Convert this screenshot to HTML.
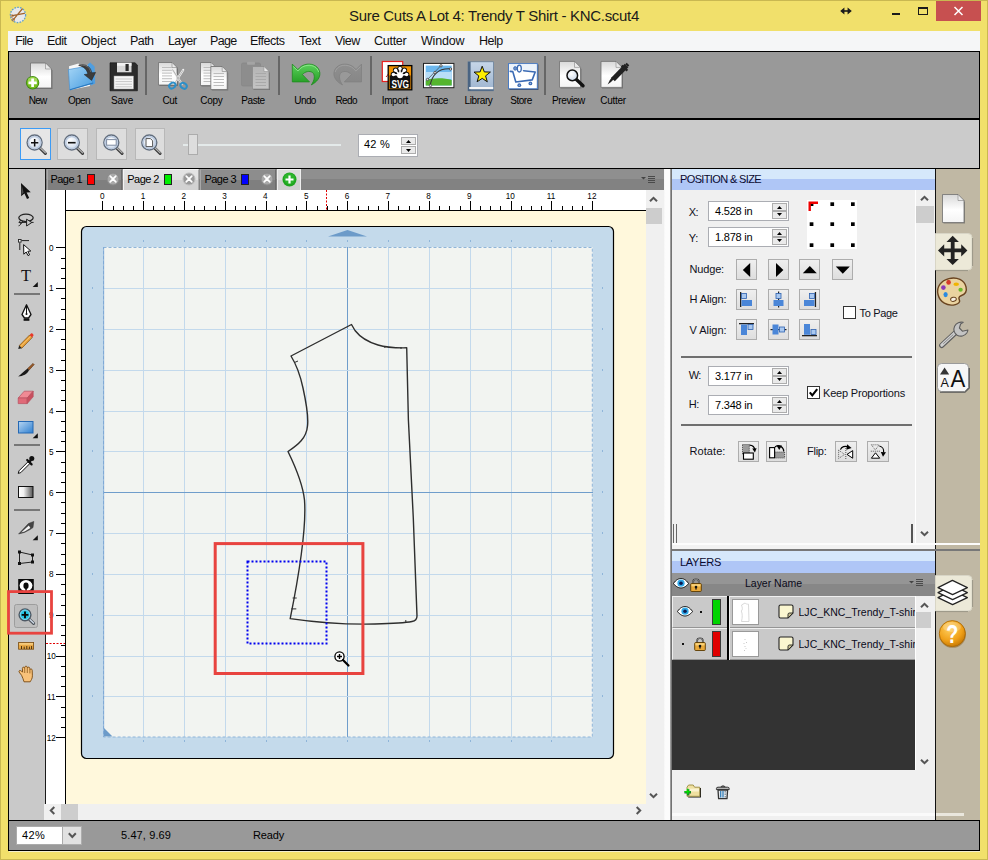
<!DOCTYPE html>
<html><head><meta charset="utf-8"><title>Sure Cuts A Lot 4</title>
<style>
html,body{margin:0;padding:0;}
body{width:988px;height:860px;overflow:hidden;background:#F1E06B;font-family:"Liberation Sans", sans-serif;}
#app{position:relative;width:988px;height:860px;overflow:hidden;}
#app div,#app span,#app svg{position:absolute;box-sizing:border-box;}
#app span{white-space:pre;}
</style></head><body><div id="app">
<div style="left:0px;top:0px;width:988px;height:860px;border:1px solid #C9B851;"></div>
<span style="left:349px;top:7.3px;font-size:15px;line-height:17px;color:#1b1b1b;letter-spacing:-0.306px;">Sure Cuts A Lot 4: Trendy T Shirt - KNC.scut4</span>
<svg style="left:8px;top:5px;" width="20" height="20" viewBox="0 0 20 20"><circle cx="10" cy="10" r="7.6" fill="#E9E9EA" stroke="#5B9FD2" stroke-width="1.3" stroke-dasharray="1.6 1.3"/><path d="M14.2 4 L5.6 14.4 M16.4 8.4 L4.4 10.6" stroke="#A0622A" stroke-width="1.2" stroke-linecap="round"/><circle cx="5.2" cy="14.8" r="1.3" fill="none" stroke="#A0622A" stroke-width=".8"/><circle cx="4" cy="11" r="1.2" fill="none" stroke="#A0622A" stroke-width=".8"/></svg>
<div style="left:936px;top:1px;width:45px;height:20px;background:#C75050;"></div>
<svg style="left:936px;top:1px;" width="45" height="20" viewBox="0 0 45 20"><path d="M18.5 6 L26.5 14 M26.5 6 L18.5 14" stroke="#fff" stroke-width="1.5" fill="none"/></svg>
<div style="left:892px;top:13px;width:8px;height:2px;background:#1b1b1b;"></div>
<div style="left:918px;top:7px;width:10px;height:8px;border:1px solid #1b1b1b;border-top-width:2px;"></div>
<svg style="left:839px;top:5px;" width="14" height="12" viewBox="0 0 14 12"><path d="M4 6 H10" stroke="#1b1b1b" stroke-width="1.6"/><path d="M1.2 6 L5.4 2.4 V9.6 Z M12.8 6 L8.6 2.4 V9.6 Z" fill="#1b1b1b"/></svg>
<div style="left:8px;top:31px;width:972px;height:20px;background:#F5F6F7;"></div>
<span style="left:15.2px;top:34.42px;font-size:12.5px;line-height:14.5px;color:#101010;letter-spacing:-0.639px;">File</span>
<span style="left:47px;top:34.42px;font-size:12.5px;line-height:14.5px;color:#101010;letter-spacing:-0.537px;">Edit</span>
<span style="left:81px;top:34.42px;font-size:12.5px;line-height:14.5px;color:#101010;letter-spacing:-0.157px;">Object</span>
<span style="left:130px;top:34.42px;font-size:12.5px;line-height:14.5px;color:#101010;letter-spacing:-0.580px;">Path</span>
<span style="left:168px;top:34.42px;font-size:12.5px;line-height:14.5px;color:#101010;letter-spacing:-0.616px;">Layer</span>
<span style="left:210px;top:34.42px;font-size:12.5px;line-height:14.5px;color:#101010;letter-spacing:-0.701px;">Page</span>
<span style="left:250px;top:34.42px;font-size:12.5px;line-height:14.5px;color:#101010;letter-spacing:-0.512px;">Effects</span>
<span style="left:299px;top:34.42px;font-size:12.5px;line-height:14.5px;color:#101010;letter-spacing:-0.334px;">Text</span>
<span style="left:335px;top:34.42px;font-size:12.5px;line-height:14.5px;color:#101010;letter-spacing:-0.569px;">View</span>
<span style="left:374px;top:34.42px;font-size:12.5px;line-height:14.5px;color:#101010;letter-spacing:-0.274px;">Cutter</span>
<span style="left:421px;top:34.42px;font-size:12.5px;line-height:14.5px;color:#101010;letter-spacing:-0.178px;">Window</span>
<span style="left:479px;top:34.42px;font-size:12.5px;line-height:14.5px;color:#101010;letter-spacing:-0.530px;">Help</span>
<div style="left:8px;top:51px;width:972px;height:69px;background:#999999;border:1px solid #000;border-bottom-width:2px;"></div>
<div style="left:9px;top:120px;width:970px;height:48px;background:#CBCBCB;"></div>
<div style="left:8px;top:120px;width:1px;height:731px;background:#000;"></div>
<div style="left:979px;top:120px;width:1px;height:49px;background:#000;"></div>
<div style="left:979px;top:820px;width:1px;height:31px;background:#000;"></div>
<div style="left:9px;top:168px;width:970px;height:1px;background:#000;"></div>
<div style="left:9px;top:169px;width:36px;height:651px;background:#C9C9C9;"></div>
<div style="left:45px;top:169px;width:1px;height:651px;background:#1a1a1a;"></div>
<div style="left:14px;top:293px;width:26px;height:2px;background:#777;"></div>
<div style="left:14px;top:444px;width:26px;height:2px;background:#777;"></div>
<div style="left:14px;top:509px;width:26px;height:2px;background:#777;"></div>
<div style="left:46px;top:169px;width:618px;height:21px;background:linear-gradient(#8f8f8f 0,#8f8f8f 50%,#828282 50%,#828282 100%);"></div>
<div style="left:47px;top:169px;width:75px;height:21px;background:linear-gradient(#8d8d8d 0,#8d8d8d 50%,#7f7f7f 50%,#7f7f7f 100%);border-left:1px solid #a8a8a8;border-top:1px solid #9c9c9c;border-right:1px solid #6c6c6c;"></div>
<span style="left:50.5px;top:172.69px;font-size:11px;line-height:13px;color:#000;letter-spacing:-0.562px;">Page 1</span>
<div style="left:87px;top:174px;width:8px;height:11px;background:#FF0000;border:1px solid #222;"></div>
<svg style="left:106.0px;top:172px;" width="14" height="14" viewBox="0 0 14 14"><circle cx="7" cy="7" r="6" fill="#a9a9a9" stroke="#8a8a8a" stroke-width="1"/><path d="M4.2 4.2 L9.8 9.8 M9.8 4.2 L4.2 9.8" stroke="#fff" stroke-width="1.7" stroke-linecap="round"/></svg>
<div style="left:123px;top:169px;width:76px;height:21px;background:linear-gradient(#e4e4e4 0,#e0e0e0 50%,#d2d2d2 50%,#d2d2d2 100%);border-left:1px solid #f4f4f4;border-top:1px solid #f4f4f4;border-right:1px solid #aaa;"></div>
<span style="left:127.3px;top:172.69px;font-size:11px;line-height:13px;color:#000;letter-spacing:-0.562px;">Page 2</span>
<div style="left:163.8px;top:174px;width:8px;height:11px;background:#00EE00;border:1px solid #222;"></div>
<svg style="left:182.4px;top:172px;" width="14" height="14" viewBox="0 0 14 14"><circle cx="7" cy="7" r="6" fill="#9a9a9a" stroke="#bdbdbd" stroke-width="1"/><path d="M4.2 4.2 L9.8 9.8 M9.8 4.2 L4.2 9.8" stroke="#fff" stroke-width="1.7" stroke-linecap="round"/></svg>
<div style="left:200px;top:169px;width:76px;height:21px;background:linear-gradient(#8d8d8d 0,#8d8d8d 50%,#7f7f7f 50%,#7f7f7f 100%);border-left:1px solid #a8a8a8;border-top:1px solid #9c9c9c;border-right:1px solid #6c6c6c;"></div>
<span style="left:204.5px;top:172.69px;font-size:11px;line-height:13px;color:#000;letter-spacing:-0.562px;">Page 3</span>
<div style="left:241px;top:174px;width:8px;height:11px;background:#0000FF;border:1px solid #222;"></div>
<svg style="left:259.5px;top:172px;" width="14" height="14" viewBox="0 0 14 14"><circle cx="7" cy="7" r="6" fill="#a9a9a9" stroke="#8a8a8a" stroke-width="1"/><path d="M4.2 4.2 L9.8 9.8 M9.8 4.2 L4.2 9.8" stroke="#fff" stroke-width="1.7" stroke-linecap="round"/></svg>
<div style="left:277px;top:169px;width:24px;height:21px;background:linear-gradient(#dcdcdc 0,#dcdcdc 50%,#cfcfcf 50%,#cfcfcf 100%);border:1px solid #eee;border-bottom:none;"></div>
<svg style="left:282px;top:172px;" width="15" height="15" viewBox="0 0 15 15"><circle cx="7.5" cy="7.5" r="7" fill="#1fa51f"/><circle cx="7.5" cy="6.5" r="5.5" fill="#35c035" opacity=".6"/><path d="M7.5 3.5 V11.5 M3.5 7.5 H11.5" stroke="#fff" stroke-width="2.2"/></svg>
<svg style="left:640px;top:174px;" width="18" height="10" viewBox="0 0 18 10"><path d="M1 3 H6 L3.5 5.5 Z" fill="#444"/><path d="M8 2.5 H15 M8 4.5 H15 M8 6.5 H15 M8 8.5 H15" stroke="#4a4a4a" stroke-width="1"/></svg>
<div style="left:46px;top:190px;width:600px;height:21px;background:#fff;"></div>
<div style="left:46px;top:190px;width:20px;height:614px;background:#fff;"></div>
<div style="left:66px;top:211px;width:580px;height:593px;background:#FFF8DC;"></div>
<svg style="left:46px;top:190px;font-family:'Liberation Sans', sans-serif;" width="600" height="614" viewBox="0 0 600 614"><rect x="56" y="11" width="1" height="9" fill="#000"/><rect x="67" y="16" width="1" height="4" fill="#000"/><rect x="77" y="16" width="1" height="4" fill="#000"/><rect x="87" y="16" width="1" height="4" fill="#000"/><rect x="97" y="11" width="1" height="9" fill="#000"/><rect x="107" y="16" width="1" height="4" fill="#000"/><rect x="118" y="16" width="1" height="4" fill="#000"/><rect x="128" y="16" width="1" height="4" fill="#000"/><rect x="138" y="11" width="1" height="9" fill="#000"/><rect x="148" y="16" width="1" height="4" fill="#000"/><rect x="158" y="16" width="1" height="4" fill="#000"/><rect x="169" y="16" width="1" height="4" fill="#000"/><rect x="179" y="11" width="1" height="9" fill="#000"/><rect x="189" y="16" width="1" height="4" fill="#000"/><rect x="199" y="16" width="1" height="4" fill="#000"/><rect x="209" y="16" width="1" height="4" fill="#000"/><rect x="220" y="11" width="1" height="9" fill="#000"/><rect x="230" y="16" width="1" height="4" fill="#000"/><rect x="240" y="16" width="1" height="4" fill="#000"/><rect x="250" y="16" width="1" height="4" fill="#000"/><rect x="260" y="11" width="1" height="9" fill="#000"/><rect x="271" y="16" width="1" height="4" fill="#000"/><rect x="281" y="16" width="1" height="4" fill="#000"/><rect x="291" y="16" width="1" height="4" fill="#000"/><rect x="301" y="11" width="1" height="9" fill="#000"/><rect x="312" y="16" width="1" height="4" fill="#000"/><rect x="322" y="16" width="1" height="4" fill="#000"/><rect x="332" y="16" width="1" height="4" fill="#000"/><rect x="342" y="11" width="1" height="9" fill="#000"/><rect x="352" y="16" width="1" height="4" fill="#000"/><rect x="363" y="16" width="1" height="4" fill="#000"/><rect x="373" y="16" width="1" height="4" fill="#000"/><rect x="383" y="11" width="1" height="9" fill="#000"/><rect x="393" y="16" width="1" height="4" fill="#000"/><rect x="403" y="16" width="1" height="4" fill="#000"/><rect x="414" y="16" width="1" height="4" fill="#000"/><rect x="424" y="11" width="1" height="9" fill="#000"/><rect x="434" y="16" width="1" height="4" fill="#000"/><rect x="444" y="16" width="1" height="4" fill="#000"/><rect x="454" y="16" width="1" height="4" fill="#000"/><rect x="465" y="11" width="1" height="9" fill="#000"/><rect x="475" y="16" width="1" height="4" fill="#000"/><rect x="485" y="16" width="1" height="4" fill="#000"/><rect x="495" y="16" width="1" height="4" fill="#000"/><rect x="505" y="11" width="1" height="9" fill="#000"/><rect x="516" y="16" width="1" height="4" fill="#000"/><rect x="526" y="16" width="1" height="4" fill="#000"/><rect x="536" y="16" width="1" height="4" fill="#000"/><rect x="546" y="11" width="1" height="9" fill="#000"/><rect x="20" y="20" width="580" height="1" fill="#000"/><rect x="19" y="0" width="1" height="614" fill="#000"/><rect x="10" y="57" width="9" height="1" fill="#000"/><rect x="15" y="68" width="4" height="1" fill="#000"/><rect x="15" y="78" width="4" height="1" fill="#000"/><rect x="15" y="88" width="4" height="1" fill="#000"/><rect x="10" y="98" width="9" height="1" fill="#000"/><rect x="15" y="108" width="4" height="1" fill="#000"/><rect x="15" y="119" width="4" height="1" fill="#000"/><rect x="15" y="129" width="4" height="1" fill="#000"/><rect x="10" y="139" width="9" height="1" fill="#000"/><rect x="15" y="149" width="4" height="1" fill="#000"/><rect x="15" y="159" width="4" height="1" fill="#000"/><rect x="15" y="170" width="4" height="1" fill="#000"/><rect x="10" y="180" width="9" height="1" fill="#000"/><rect x="15" y="190" width="4" height="1" fill="#000"/><rect x="15" y="200" width="4" height="1" fill="#000"/><rect x="15" y="210" width="4" height="1" fill="#000"/><rect x="10" y="221" width="9" height="1" fill="#000"/><rect x="15" y="231" width="4" height="1" fill="#000"/><rect x="15" y="241" width="4" height="1" fill="#000"/><rect x="15" y="251" width="4" height="1" fill="#000"/><rect x="10" y="261" width="9" height="1" fill="#000"/><rect x="15" y="272" width="4" height="1" fill="#000"/><rect x="15" y="282" width="4" height="1" fill="#000"/><rect x="15" y="292" width="4" height="1" fill="#000"/><rect x="10" y="302" width="9" height="1" fill="#000"/><rect x="15" y="312" width="4" height="1" fill="#000"/><rect x="15" y="323" width="4" height="1" fill="#000"/><rect x="15" y="333" width="4" height="1" fill="#000"/><rect x="10" y="343" width="9" height="1" fill="#000"/><rect x="15" y="353" width="4" height="1" fill="#000"/><rect x="15" y="364" width="4" height="1" fill="#000"/><rect x="15" y="374" width="4" height="1" fill="#000"/><rect x="10" y="384" width="9" height="1" fill="#000"/><rect x="15" y="394" width="4" height="1" fill="#000"/><rect x="15" y="404" width="4" height="1" fill="#000"/><rect x="15" y="415" width="4" height="1" fill="#000"/><rect x="10" y="425" width="9" height="1" fill="#000"/><rect x="15" y="435" width="4" height="1" fill="#000"/><rect x="15" y="445" width="4" height="1" fill="#000"/><rect x="15" y="455" width="4" height="1" fill="#000"/><rect x="10" y="466" width="9" height="1" fill="#000"/><rect x="15" y="476" width="4" height="1" fill="#000"/><rect x="15" y="486" width="4" height="1" fill="#000"/><rect x="15" y="496" width="4" height="1" fill="#000"/><rect x="10" y="506" width="9" height="1" fill="#000"/><rect x="15" y="517" width="4" height="1" fill="#000"/><rect x="15" y="527" width="4" height="1" fill="#000"/><rect x="15" y="537" width="4" height="1" fill="#000"/><rect x="10" y="547" width="9" height="1" fill="#000"/><text x="56.2" y="9.2" font-size="8.2" text-anchor="middle" fill="#000">0</text><text x="5.2" y="60.5" font-size="8.2" text-anchor="middle" fill="#000">0</text><text x="97.0" y="9.2" font-size="8.2" text-anchor="middle" fill="#000">1</text><text x="5.2" y="101.3" font-size="8.2" text-anchor="middle" fill="#000">1</text><text x="137.8" y="9.2" font-size="8.2" text-anchor="middle" fill="#000">2</text><text x="5.2" y="142.2" font-size="8.2" text-anchor="middle" fill="#000">2</text><text x="178.6" y="9.2" font-size="8.2" text-anchor="middle" fill="#000">3</text><text x="5.2" y="183.0" font-size="8.2" text-anchor="middle" fill="#000">3</text><text x="219.4" y="9.2" font-size="8.2" text-anchor="middle" fill="#000">4</text><text x="5.2" y="223.8" font-size="8.2" text-anchor="middle" fill="#000">4</text><text x="260.2" y="9.2" font-size="8.2" text-anchor="middle" fill="#000">5</text><text x="5.2" y="264.6" font-size="8.2" text-anchor="middle" fill="#000">5</text><text x="301.0" y="9.2" font-size="8.2" text-anchor="middle" fill="#000">6</text><text x="5.2" y="305.5" font-size="8.2" text-anchor="middle" fill="#000">6</text><text x="341.8" y="9.2" font-size="8.2" text-anchor="middle" fill="#000">7</text><text x="5.2" y="346.3" font-size="8.2" text-anchor="middle" fill="#000">7</text><text x="382.6" y="9.2" font-size="8.2" text-anchor="middle" fill="#000">8</text><text x="5.2" y="387.1" font-size="8.2" text-anchor="middle" fill="#000">8</text><text x="423.4" y="9.2" font-size="8.2" text-anchor="middle" fill="#000">9</text><text x="5.2" y="428.0" font-size="8.2" text-anchor="middle" fill="#000">9</text><text x="464.2" y="9.2" font-size="8.2" text-anchor="middle" fill="#000">10</text><text x="5.2" y="468.8" font-size="8.2" text-anchor="middle" fill="#000">10</text><text x="505.1" y="9.2" font-size="8.2" text-anchor="middle" fill="#000">11</text><text x="5.2" y="509.6" font-size="8.2" text-anchor="middle" fill="#000">11</text><text x="545.9" y="9.2" font-size="8.2" text-anchor="middle" fill="#000">12</text><text x="5.2" y="550.5" font-size="8.2" text-anchor="middle" fill="#000">12</text><path d="M280.5 0 V20" stroke="#e00000" stroke-width="1" stroke-dasharray="2 1.5"/><path d="M0 453.5 H19" stroke="#e00000" stroke-width="1" stroke-dasharray="2 1.5"/></svg>
<svg style="left:0px;top:0px;pointer-events:none;" width="988" height="860" viewBox="0 0 988 860"><rect x="81.5" y="226.5" width="532" height="532" rx="5" ry="5" fill="#C4DAEB" stroke="#000" stroke-width="1.2"/><rect x="103" y="247" width="489.6" height="490" fill="#F2F4F1"/><rect x="143" y="247" width="1" height="490" fill="#C3D9EC"/><rect x="184" y="247" width="1" height="490" fill="#C3D9EC"/><rect x="225" y="247" width="1" height="490" fill="#C3D9EC"/><rect x="266" y="247" width="1" height="490" fill="#C3D9EC"/><rect x="306" y="247" width="1" height="490" fill="#C3D9EC"/><rect x="347" y="247" width="1" height="490" fill="#6F9DCB"/><rect x="388" y="247" width="1" height="490" fill="#C3D9EC"/><rect x="429" y="247" width="1" height="490" fill="#C3D9EC"/><rect x="470" y="247" width="1" height="490" fill="#C3D9EC"/><rect x="511" y="247" width="1" height="490" fill="#C3D9EC"/><rect x="551" y="247" width="1" height="490" fill="#C3D9EC"/><rect x="103" y="288" width="490" height="1" fill="#C3D9EC"/><rect x="103" y="329" width="490" height="1" fill="#C3D9EC"/><rect x="103" y="370" width="490" height="1" fill="#C3D9EC"/><rect x="103" y="411" width="490" height="1" fill="#C3D9EC"/><rect x="103" y="451" width="490" height="1" fill="#C3D9EC"/><rect x="103" y="492" width="490" height="1" fill="#6F9DCB"/><rect x="103" y="533" width="490" height="1" fill="#C3D9EC"/><rect x="103" y="574" width="490" height="1" fill="#C3D9EC"/><rect x="103" y="615" width="490" height="1" fill="#C3D9EC"/><rect x="103" y="656" width="490" height="1" fill="#C3D9EC"/><rect x="103" y="696" width="490" height="1" fill="#C3D9EC"/><rect x="103.5" y="247.5" width="488.8" height="489.5" fill="none" stroke="#8FB5D9" stroke-width="1" stroke-dasharray="3 2"/><rect x="103" y="247" width="1.2" height="490" fill="#7AA6D4" opacity=".75"/><path d="M328 236.5 L347.5 230 L367 236.5 Z" fill="#6C9BC9"/><path d="M104 728 L104 736.5 L112.5 736.5 Z" fill="#6C9BC9"/><rect x="143" y="240" width="1" height="2" fill="#8FB5D9"/><rect x="143" y="740" width="1" height="2" fill="#8FB5D9"/><rect x="92" y="287" width="1" height="2" fill="#8FB5D9"/><rect x="602" y="287" width="1" height="2" fill="#8FB5D9"/><rect x="184" y="240" width="1" height="2" fill="#8FB5D9"/><rect x="184" y="740" width="1" height="2" fill="#8FB5D9"/><rect x="92" y="328" width="1" height="2" fill="#8FB5D9"/><rect x="602" y="328" width="1" height="2" fill="#8FB5D9"/><rect x="225" y="240" width="1" height="2" fill="#8FB5D9"/><rect x="225" y="740" width="1" height="2" fill="#8FB5D9"/><rect x="92" y="369" width="1" height="2" fill="#8FB5D9"/><rect x="602" y="369" width="1" height="2" fill="#8FB5D9"/><rect x="266" y="240" width="1" height="2" fill="#8FB5D9"/><rect x="266" y="740" width="1" height="2" fill="#8FB5D9"/><rect x="92" y="410" width="1" height="2" fill="#8FB5D9"/><rect x="602" y="410" width="1" height="2" fill="#8FB5D9"/><rect x="306" y="240" width="1" height="2" fill="#8FB5D9"/><rect x="306" y="740" width="1" height="2" fill="#8FB5D9"/><rect x="92" y="450" width="1" height="2" fill="#8FB5D9"/><rect x="602" y="450" width="1" height="2" fill="#8FB5D9"/><rect x="347" y="240" width="1" height="2" fill="#8FB5D9"/><rect x="347" y="740" width="1" height="2" fill="#8FB5D9"/><rect x="92" y="491" width="1" height="2" fill="#8FB5D9"/><rect x="602" y="491" width="1" height="2" fill="#8FB5D9"/><rect x="388" y="240" width="1" height="2" fill="#8FB5D9"/><rect x="388" y="740" width="1" height="2" fill="#8FB5D9"/><rect x="92" y="532" width="1" height="2" fill="#8FB5D9"/><rect x="602" y="532" width="1" height="2" fill="#8FB5D9"/><rect x="429" y="240" width="1" height="2" fill="#8FB5D9"/><rect x="429" y="740" width="1" height="2" fill="#8FB5D9"/><rect x="92" y="573" width="1" height="2" fill="#8FB5D9"/><rect x="602" y="573" width="1" height="2" fill="#8FB5D9"/><rect x="470" y="240" width="1" height="2" fill="#8FB5D9"/><rect x="470" y="740" width="1" height="2" fill="#8FB5D9"/><rect x="92" y="614" width="1" height="2" fill="#8FB5D9"/><rect x="602" y="614" width="1" height="2" fill="#8FB5D9"/><rect x="511" y="240" width="1" height="2" fill="#8FB5D9"/><rect x="511" y="740" width="1" height="2" fill="#8FB5D9"/><rect x="92" y="655" width="1" height="2" fill="#8FB5D9"/><rect x="602" y="655" width="1" height="2" fill="#8FB5D9"/><rect x="551" y="240" width="1" height="2" fill="#8FB5D9"/><rect x="551" y="740" width="1" height="2" fill="#8FB5D9"/><rect x="92" y="695" width="1" height="2" fill="#8FB5D9"/><rect x="602" y="695" width="1" height="2" fill="#8FB5D9"/><path d="M351.5 324.5 L291 356 C296 364 300 374 303 388 C306.5 404 308.5 418 307.5 426 C306.5 438 298 445 288 451.5 C296 468 303 486 304.5 500 C306 520 302 560 290.2 618.6 C320 623 350 624.5 375 624 C392 623.5 405 622.8 412 621.5 C416 620.8 417 619 417 616 L413.3 518 L408.4 420 L406.7 347.8 C395 348 386 347.5 378 345 C368 342 360 337 355 330.5 Z" fill="none" stroke="#2e2e2e" stroke-width="1.4" stroke-linejoin="round"/><path d="M292.6 598 H296.7 M291.2 608.9 H296.3 M405.8 620 V622.6 M294.5 362.5 L298 361 M384.5 346 L385 348 M401 347 V349" stroke="#2e2e2e" stroke-width="1"/><rect x="215.2" y="543.6" width="147.7" height="129.9" fill="none" stroke="#E8433F" stroke-width="3"/><rect x="247.5" y="561.5" width="79" height="82" fill="none" stroke="#0000F0" stroke-width="2" stroke-dasharray="2 2"/><circle cx="339.5" cy="656.5" r="4.6" fill="#fff" stroke="#000" stroke-width="1.3"/><path d="M337 656.5 H342 M339.5 654 V659" stroke="#000" stroke-width="1.4"/><path d="M343 660 L348.5 665.5" stroke="#000" stroke-width="2.2" stroke-linecap="round"/></svg>
<div style="left:646px;top:190px;width:18px;height:630px;background:#F0F0F0;"></div>
<div style="left:646px;top:208px;width:16px;height:16px;background:#CDCDCD;"></div>
<div style="left:44px;top:804px;width:620px;height:16px;background:#F0F0F0;"></div>
<div style="left:61px;top:804px;width:17px;height:16px;background:#CDCDCD;"></div>
<svg style="left:648px;top:195.4px;" width="11" height="8" viewBox="0 0 11 8"><path d="M2 6.3 L5.5 2.8 L9 6.3" stroke="#555" stroke-width="2" fill="none"/></svg>
<svg style="left:648px;top:792.2px;" width="11" height="8" viewBox="0 0 11 8"><path d="M2 1.7 L5.5 5.2 L9 1.7" stroke="#555" stroke-width="2" fill="none"/></svg>
<svg style="left:48px;top:805px;" width="8" height="11" viewBox="0 0 8 11"><path d="M6.3 2 L2.8 5.5 L6.3 9" stroke="#555" stroke-width="2" fill="none"/></svg>
<svg style="left:635.3px;top:804.8px;" width="8" height="11" viewBox="0 0 8 11"><path d="M1.7 2 L5.2 5.5 L1.7 9" stroke="#555" stroke-width="2" fill="none"/></svg>
<div style="left:9px;top:820px;width:970px;height:31px;background:#999999;border-top:1px solid #000;border-bottom:1px solid #000;"></div>
<div style="left:9px;top:851px;width:971px;height:1px;background:#F3F0D0;"></div>
<div style="left:16px;top:826px;width:47px;height:19px;background:#fff;border:1px solid #ABABAB;"></div>
<div style="left:63px;top:826px;width:19px;height:19px;background:#E1E1E1;border:1px solid #ADADAD;border-left:none;"></div>
<svg style="left:66px;top:831px;" width="12" height="9" viewBox="0 0 12 9"><path d="M2.8 2.3 L6.3 6 L9.8 2.3" stroke="#555" stroke-width="2" fill="none"/></svg>
<span style="left:22px;top:829.19px;font-size:11px;line-height:13px;color:#000;letter-spacing:0.323px;">42%</span>
<span style="left:121px;top:829.19px;font-size:11px;line-height:13px;color:#000;letter-spacing:0.106px;">5.47, 9.69</span>
<span style="left:253px;top:829.19px;font-size:11px;line-height:13px;color:#000;letter-spacing:-0.159px;">Ready</span>
<div style="left:664px;top:169px;width:8px;height:651px;background:linear-gradient(90deg,#f6f6f6 0,#fcfcfc 20%,#fcfcfc 72%,#a0a0a0 80%,#5e5e5e 100%);"></div>
<div style="left:672px;top:169px;width:263px;height:651px;background:#F0F0F0;"></div>
<div style="left:936px;top:169px;width:44px;height:651px;background:#C0B8A4;"></div>
<div style="left:935px;top:169px;width:1px;height:651px;background:#111;"></div>
<div style="left:672px;top:169px;width:263px;height:21px;background:linear-gradient(#D6E8FB 0,#D6E8FB 46%,#AFC6F6 46%,#AFC6F6 100%);"></div>
<span style="left:680px;top:173.09px;font-size:11px;line-height:13px;color:#0a0a30;letter-spacing:-0.631px;">POSITION &amp; SIZE</span>
<div style="left:915px;top:190px;width:20px;height:354px;background:#F0F0F0;border-left:1px solid #fff;"></div>
<div style="left:916px;top:206px;width:18px;height:17px;background:#CDCDCD;"></div>
<svg style="left:919px;top:194.4px;" width="11" height="8" viewBox="0 0 11 8"><path d="M2 6.3 L5.5 2.8 L9 6.3" stroke="#555" stroke-width="2" fill="none"/></svg>
<svg style="left:919px;top:530px;" width="11" height="8" viewBox="0 0 11 8"><path d="M2 1.7 L5.5 5.2 L9 1.7" stroke="#555" stroke-width="2" fill="none"/></svg>
<div style="left:708px;top:201px;width:81px;height:20px;background:#fff;border:1px solid #ABADB3;"></div>
<div style="left:772px;top:203px;width:15px;height:8px;background:#EAEAEA;border:1px solid #ADADAD;"></div>
<div style="left:772px;top:210.5px;width:15px;height:8px;background:#EAEAEA;border:1px solid #ADADAD;"></div>
<svg style="left:777px;top:206.2px;" width="5" height="3" viewBox="0 0 5 3"><path d="M0 3 L2.5 0 L5 3 Z" fill="#000"/></svg>
<svg style="left:777px;top:212.6px;" width="5" height="3" viewBox="0 0 5 3"><path d="M0 0 L2.5 3 L5 0 Z" fill="#000"/></svg>
<span style="left:688.8px;top:205.69px;font-size:11px;line-height:13px;color:#101020;letter-spacing:-0.703px;">X:</span>
<span style="left:715px;top:205.39px;font-size:11px;line-height:13px;color:#000;letter-spacing:-0.207px;">4.528 in</span>
<div style="left:708px;top:227px;width:81px;height:20px;background:#fff;border:1px solid #ABADB3;"></div>
<div style="left:772px;top:229px;width:15px;height:8px;background:#EAEAEA;border:1px solid #ADADAD;"></div>
<div style="left:772px;top:236.5px;width:15px;height:8px;background:#EAEAEA;border:1px solid #ADADAD;"></div>
<svg style="left:777px;top:232.2px;" width="5" height="3" viewBox="0 0 5 3"><path d="M0 3 L2.5 0 L5 3 Z" fill="#000"/></svg>
<svg style="left:777px;top:238.6px;" width="5" height="3" viewBox="0 0 5 3"><path d="M0 0 L2.5 3 L5 0 Z" fill="#000"/></svg>
<span style="left:688.8px;top:231.69px;font-size:11px;line-height:13px;color:#101020;letter-spacing:-0.398px;">Y:</span>
<span style="left:715px;top:231.39px;font-size:11px;line-height:13px;color:#000;letter-spacing:-0.207px;">1.878 in</span>
<div style="left:708px;top:366px;width:81px;height:20px;background:#fff;border:1px solid #ABADB3;"></div>
<div style="left:772px;top:368px;width:15px;height:8px;background:#EAEAEA;border:1px solid #ADADAD;"></div>
<div style="left:772px;top:375.5px;width:15px;height:8px;background:#EAEAEA;border:1px solid #ADADAD;"></div>
<svg style="left:777px;top:371.2px;" width="5" height="3" viewBox="0 0 5 3"><path d="M0 3 L2.5 0 L5 3 Z" fill="#000"/></svg>
<svg style="left:777px;top:377.6px;" width="5" height="3" viewBox="0 0 5 3"><path d="M0 0 L2.5 3 L5 0 Z" fill="#000"/></svg>
<span style="left:688.8px;top:369.39px;font-size:11px;line-height:13px;color:#101020;letter-spacing:-0.625px;">W:</span>
<span style="left:715px;top:370.39px;font-size:11px;line-height:13px;color:#000;letter-spacing:-0.207px;">3.177 in</span>
<div style="left:708px;top:395px;width:81px;height:20px;background:#fff;border:1px solid #ABADB3;"></div>
<div style="left:772px;top:397px;width:15px;height:8px;background:#EAEAEA;border:1px solid #ADADAD;"></div>
<div style="left:772px;top:404.5px;width:15px;height:8px;background:#EAEAEA;border:1px solid #ADADAD;"></div>
<svg style="left:777px;top:400.2px;" width="5" height="3" viewBox="0 0 5 3"><path d="M0 3 L2.5 0 L5 3 Z" fill="#000"/></svg>
<svg style="left:777px;top:406.6px;" width="5" height="3" viewBox="0 0 5 3"><path d="M0 0 L2.5 3 L5 0 Z" fill="#000"/></svg>
<span style="left:688.8px;top:398.39px;font-size:11px;line-height:13px;color:#101020;letter-spacing:-0.500px;">H:</span>
<span style="left:715px;top:399.39px;font-size:11px;line-height:13px;color:#000;letter-spacing:-0.207px;">7.348 in</span>
<div style="left:807px;top:200px;width:50px;height:49px;background:#fff;"></div>
<svg style="left:807px;top:200px;" width="51" height="49" viewBox="0 0 51 49"><rect x="2.699999999999932" y="2.3000000000000114" width="3.7" height="3.7" fill="#000"/><rect x="2.699999999999932" y="22.30000000000001" width="3.7" height="3.7" fill="#000"/><rect x="2.699999999999932" y="43.30000000000001" width="3.7" height="3.7" fill="#000"/><rect x="23.399999999999977" y="2.3000000000000114" width="3.7" height="3.7" fill="#000"/><rect x="23.399999999999977" y="22.30000000000001" width="3.7" height="3.7" fill="#000"/><rect x="23.399999999999977" y="43.30000000000001" width="3.7" height="3.7" fill="#000"/><rect x="44.0" y="2.3000000000000114" width="3.7" height="3.7" fill="#000"/><rect x="44.0" y="22.30000000000001" width="3.7" height="3.7" fill="#000"/><rect x="44.0" y="43.30000000000001" width="3.7" height="3.7" fill="#000"/><path d="M2.7 11 V2.7 H11" stroke="#f00000" stroke-width="2.4" fill="none"/></svg>
<span style="left:689.5px;top:262.99px;font-size:11px;line-height:13px;color:#101020;letter-spacing:-0.164px;">Nudge:</span>
<div style="left:736px;top:259px;width:21px;height:21px;background:linear-gradient(#efefef,#dedede);border:1px solid #ADADAD;"></div>
<svg style="left:736px;top:259px;" width="21" height="21" viewBox="0 0 21 21"><path d="M14.2 4 V18 L6.8 11 Z" fill="#000"/></svg>
<div style="left:768px;top:259px;width:21px;height:21px;background:linear-gradient(#efefef,#dedede);border:1px solid #ADADAD;"></div>
<svg style="left:768px;top:259px;" width="21" height="21" viewBox="0 0 21 21"><path d="M8 4 V18 L15.4 11 Z" fill="#000"/></svg>
<div style="left:799px;top:259px;width:21px;height:21px;background:linear-gradient(#efefef,#dedede);border:1px solid #ADADAD;"></div>
<svg style="left:799px;top:259px;" width="21" height="21" viewBox="0 0 21 21"><path d="M3.8 14.3 H17.8 L10.8 7 Z" fill="#000"/></svg>
<div style="left:832px;top:259px;width:21px;height:21px;background:linear-gradient(#efefef,#dedede);border:1px solid #ADADAD;"></div>
<svg style="left:832px;top:259px;" width="21" height="21" viewBox="0 0 21 21"><path d="M3.8 7.5 H17.8 L10.8 14.8 Z" fill="#000"/></svg>
<span style="left:689.5px;top:293.19px;font-size:11px;line-height:13px;color:#101020;letter-spacing:-0.115px;">H Align:</span>
<span style="left:689.5px;top:324.19px;font-size:11px;line-height:13px;color:#101020;letter-spacing:-0.039px;">V Align:</span>
<div style="left:736px;top:289px;width:21px;height:21px;background:linear-gradient(#efefef,#dedede);border:1px solid #ADADAD;"></div>
<svg style="left:736px;top:289px;" width="21" height="21" viewBox="0 0 21 21"><rect x="4" y="3" width="1.3" height="15" fill="#222"/><rect x="5.5" y="4.5" width="5" height="5" fill="#A9C8F0" stroke="#2E62B0" stroke-width=".8"/><rect x="5.5" y="11" width="10.5" height="6" fill="#4A86D8"/></svg>
<div style="left:768px;top:289px;width:21px;height:21px;background:linear-gradient(#efefef,#dedede);border:1px solid #ADADAD;"></div>
<svg style="left:768px;top:289px;" width="21" height="21" viewBox="0 0 21 21"><rect x="10" y="2.5" width="1.2" height="16" fill="#222"/><rect x="8" y="4.5" width="5" height="5" fill="#A9C8F0" stroke="#2E62B0" stroke-width=".8"/><rect x="5.5" y="11" width="10" height="6" fill="#4A86D8"/></svg>
<div style="left:799px;top:289px;width:21px;height:21px;background:linear-gradient(#efefef,#dedede);border:1px solid #ADADAD;"></div>
<svg style="left:799px;top:289px;" width="21" height="21" viewBox="0 0 21 21"><rect x="15.8" y="3" width="1.3" height="15" fill="#222"/><rect x="10.5" y="4.5" width="5" height="5" fill="#A9C8F0" stroke="#2E62B0" stroke-width=".8"/><rect x="5" y="11" width="10.5" height="6" fill="#4A86D8"/></svg>
<div style="left:736px;top:319px;width:21px;height:21px;background:linear-gradient(#efefef,#dedede);border:1px solid #ADADAD;"></div>
<svg style="left:736px;top:319px;" width="21" height="21" viewBox="0 0 21 21"><rect x="3" y="4" width="15" height="1.3" fill="#222"/><rect x="5" y="5.5" width="6" height="10.5" fill="#4A86D8"/><rect x="12" y="5.5" width="5" height="5" fill="#A9C8F0" stroke="#2E62B0" stroke-width=".8"/></svg>
<div style="left:768px;top:319px;width:21px;height:21px;background:linear-gradient(#efefef,#dedede);border:1px solid #ADADAD;"></div>
<svg style="left:768px;top:319px;" width="21" height="21" viewBox="0 0 21 21"><rect x="2.5" y="10" width="16" height="1.2" fill="#222"/><rect x="4.5" y="5.5" width="6" height="10" fill="#4A86D8"/><rect x="11.5" y="8" width="5" height="5" fill="#A9C8F0" stroke="#2E62B0" stroke-width=".8"/></svg>
<div style="left:799px;top:319px;width:21px;height:21px;background:linear-gradient(#efefef,#dedede);border:1px solid #ADADAD;"></div>
<svg style="left:799px;top:319px;" width="21" height="21" viewBox="0 0 21 21"><rect x="3" y="16" width="15" height="1.3" fill="#222"/><rect x="5" y="5" width="6" height="10.8" fill="#4A86D8"/><rect x="12" y="10.5" width="5" height="5" fill="#A9C8F0" stroke="#2E62B0" stroke-width=".8"/></svg>
<div style="left:843px;top:306px;width:13px;height:13px;background:#fff;border:1px solid #333;"></div>
<span style="left:859.5px;top:307.49px;font-size:11px;line-height:13px;color:#101020;letter-spacing:-0.339px;">To Page</span>
<div style="left:807px;top:386px;width:13px;height:13px;background:#fff;border:1px solid #333;"></div>
<svg style="left:807px;top:386px;" width="13" height="13" viewBox="0 0 13 13"><path d="M2.8 6.3 L5.3 9.4 L10.2 3.2" stroke="#000" stroke-width="2.1" fill="none"/></svg>
<span style="left:823px;top:387.49px;font-size:11px;line-height:13px;color:#101020;letter-spacing:-0.188px;">Keep Proportions</span>
<div style="left:681px;top:356px;width:231px;height:2px;background:#6f6f6f;"></div>
<div style="left:681px;top:424px;width:231px;height:2px;background:#6f6f6f;"></div>
<span style="left:689.5px;top:445.49px;font-size:11px;line-height:13px;color:#101020;letter-spacing:0.076px;">Rotate:</span>
<span style="left:807px;top:445.49px;font-size:11px;line-height:13px;color:#101020;letter-spacing:-0.256px;">Flip:</span>
<div style="left:738px;top:441px;width:21px;height:21px;background:linear-gradient(#efefef,#dedede);border:1px solid #ADADAD;"></div>
<svg style="left:738px;top:441px;" width="21" height="21" viewBox="0 0 21 21"><rect x="4.5" y="3.5" width="6.8" height="10" fill="#9c9c9c" stroke="#444" stroke-width=".9" stroke-dasharray="1 1"/><rect x="5.5" y="12" width="9.8" height="6.2" fill="#fff" stroke="#000" stroke-width="1.1"/><path d="M11.5 4.2 C14.6 4.4 16.6 6.4 16.8 9" stroke="#000" stroke-width="1.2" fill="none"/><path d="M14.2 7.6 L18.6 7.2 L16.9 11.6 Z" fill="#000"/></svg>
<div style="left:766px;top:441px;width:21px;height:21px;background:linear-gradient(#efefef,#dedede);border:1px solid #ADADAD;"></div>
<svg style="left:766px;top:441px;" width="21" height="21" viewBox="0 0 21 21"><rect x="8.6" y="11" width="10" height="6" fill="#9c9c9c" stroke="#444" stroke-width=".9" stroke-dasharray="1 1"/><rect x="3.6" y="6.6" width="5" height="10.2" fill="#fff" stroke="#000" stroke-width="1.1"/><path d="M9 6 C10.5 4.6 13 4.4 15 5.6 C16.8 6.8 17.8 8.6 17.8 10.6" stroke="#000" stroke-width="1.2" fill="none"/><path d="M10.6 4.4 L16 4.6 L13.2 9 Z" fill="#000"/></svg>
<div style="left:835px;top:441px;width:22px;height:21px;background:linear-gradient(#efefef,#dedede);border:1px solid #ADADAD;"></div>
<svg style="left:835px;top:441px;" width="22" height="21" viewBox="0 0 22 21"><path d="M3.6 9.2 V17.5 L9.6 13.4 Z" fill="none" stroke="#555" stroke-width=".9" stroke-dasharray="1 1"/><path d="M17.7 9.6 V17.2 L12 13.4 Z" fill="#fff" stroke="#000" stroke-width="1"/><path d="M10.8 5 V18.4" stroke="#444" stroke-width=".9" stroke-dasharray="1 1"/><path d="M5.4 8.6 C6.6 5.6 10 4.6 13 5.8" stroke="#000" stroke-width="1.2" fill="none"/><path d="M12 3.2 L16.6 7 L11.4 8.8 Z" fill="#000"/></svg>
<div style="left:867px;top:441px;width:22px;height:21px;background:linear-gradient(#efefef,#dedede);border:1px solid #ADADAD;"></div>
<svg style="left:867px;top:441px;" width="22" height="21" viewBox="0 0 22 21"><path d="M4.4 3.8 H12.2 L8.3 9 Z" fill="none" stroke="#555" stroke-width=".9" stroke-dasharray="1 1"/><path d="M4.4 17.2 H12.7 L8.5 11.8 Z" fill="#fff" stroke="#000" stroke-width="1"/><path d="M3.8 10.2 H13.2" stroke="#444" stroke-width=".9" stroke-dasharray="1 1"/><path d="M12.4 5 C15.4 5.6 17 8.4 16.6 11.4" stroke="#000" stroke-width="1.2" fill="none"/><path d="M13.8 11 L19 11.2 L16 15.8 Z" fill="#000"/></svg>
<div style="left:673px;top:524px;width:1px;height:20px;background:#666;"></div>
<div style="left:676px;top:524px;width:1px;height:20px;background:#666;"></div>
<div style="left:911px;top:524px;width:2px;height:20px;background:#555;"></div>
<div style="left:672px;top:543px;width:263px;height:6px;background:#F2F2F2;"></div>
<div style="left:672px;top:543px;width:308px;height:2px;background:#FCFCFC;"></div>
<div style="left:672px;top:549px;width:308px;height:2px;background:#787878;"></div>
<div style="left:672px;top:551px;width:263px;height:22px;background:linear-gradient(#D6E8FB 0,#D6E8FB 46%,#AFC6F6 46%,#AFC6F6 100%);"></div>
<span style="left:680px;top:556.09px;font-size:11px;line-height:13px;color:#0a0a30;letter-spacing:-0.266px;">LAYERS</span>
<div style="left:672px;top:573px;width:263px;height:23px;background:linear-gradient(#959595 0,#959595 48%,#878787 48%,#878787 100%);"></div>
<span style="left:745px;top:577.41px;font-size:10.5px;line-height:12.5px;color:#0a0a1a;letter-spacing:-0.020px;">Layer Name</span>
<svg style="left:908px;top:578px;" width="18" height="10" viewBox="0 0 18 10"><path d="M1 3 H6 L3.5 5.5 Z" fill="#444"/><path d="M8 1.5 H15 M8 3.5 H15 M8 5.5 H15 M8 7.5 H15" stroke="#4a4a4a" stroke-width="1"/></svg>
<svg style="left:673px;top:578px;" width="16" height="11" viewBox="0 0 16 11"><path d="M0.5 5.5 C3 1.5 6 0.5 8 0.5 C10 0.5 13 1.5 15.5 5.5 C13 9 10 10 8 10 C6 10 3 9 0.5 5.5 Z" fill="#fff" stroke="#111" stroke-width="1"/><circle cx="8" cy="5.2" r="3.6" fill="#2fa8e8"/><circle cx="8" cy="5.2" r="1.8" fill="#0a1a50"/></svg>
<svg style="left:690px;top:577px;" width="12" height="15" viewBox="0 0 12 15"><path d="M3.2 7 V4.5 C3.2 1.5 8.8 1.5 8.8 4.5 V7" fill="none" stroke="#333" stroke-width="1.7"/><path d="M3.2 7 V4.5 C3.2 1.5 8.8 1.5 8.8 4.5 V7" fill="none" stroke="#bbb" stroke-width=".6"/><rect x="0.7" y="6.5" width="10.6" height="8" rx="1" fill="#E9A93A" stroke="#5a3a00" stroke-width=".9"/><rect x="1.5" y="7.2" width="9" height="2.2" fill="#F8D27A"/><circle cx="6" cy="10" r="1.3" fill="#111"/><rect x="5.4" y="10" width="1.2" height="2.6" fill="#111"/></svg>
<div style="left:672px;top:596px;width:243px;height:32px;background:#C9C9C9;border-top:1px solid #efefef;border-left:1px solid #efefef;border-bottom:1px solid #959595;"></div>
<div style="left:727px;top:596px;width:2px;height:32px;background:#000;"></div>
<div style="left:729px;top:596px;width:1px;height:32px;background:#efefef;"></div>
<div style="left:712px;top:599px;width:9px;height:26px;background:#00D400;border:1px solid #3a3a3a;"></div>
<div style="left:732px;top:599px;width:27px;height:26px;background:#fff;border:1px solid #999;"></div>
<svg style="left:778px;top:604px;" width="16" height="15" viewBox="0 0 16 15"><path d="M1 2.5 Q1 1 2.5 1 H13.5 Q15 1 15 2.5 V9 L10 14 H2.5 Q1 14 1 12.5 Z" fill="#FAF6D0" stroke="#222" stroke-width="1.1"/><path d="M15 9 H11.5 Q10 9 10 10.5 V14 Z" fill="#C9C090" stroke="#222" stroke-width=".9"/></svg>
<span style="left:798.5px;top:605.91px;font-size:10.5px;line-height:12.5px;color:#0a0a1a;letter-spacing:0.031px;width:116px;overflow:hidden;">LJC_KNC_Trendy_T-shirt</span>
<svg style="left:677px;top:606px;" width="16" height="11" viewBox="0 0 16 11"><path d="M0.5 5.5 C3 1.5 6 0.5 8 0.5 C10 0.5 13 1.5 15.5 5.5 C13 9 10 10 8 10 C6 10 3 9 0.5 5.5 Z" fill="#fff" stroke="#111" stroke-width="1"/><circle cx="8" cy="5.2" r="3.6" fill="#2fa8e8"/><circle cx="8" cy="5.2" r="1.8" fill="#0a1a50"/></svg>
<div style="left:700px;top:611px;width:2px;height:2px;background:#111;"></div>
<div style="left:672px;top:628px;width:243px;height:32px;background:#C9C9C9;border-top:1px solid #efefef;border-left:1px solid #efefef;border-bottom:1px solid #959595;"></div>
<div style="left:727px;top:628px;width:2px;height:32px;background:#000;"></div>
<div style="left:729px;top:628px;width:1px;height:32px;background:#efefef;"></div>
<div style="left:712px;top:631px;width:9px;height:26px;background:#E00000;border:1px solid #3a3a3a;"></div>
<div style="left:732px;top:631px;width:27px;height:26px;background:#fff;border:1px solid #999;"></div>
<svg style="left:778px;top:636px;" width="16" height="15" viewBox="0 0 16 15"><path d="M1 2.5 Q1 1 2.5 1 H13.5 Q15 1 15 2.5 V9 L10 14 H2.5 Q1 14 1 12.5 Z" fill="#FAF6D0" stroke="#222" stroke-width="1.1"/><path d="M15 9 H11.5 Q10 9 10 10.5 V14 Z" fill="#C9C090" stroke="#222" stroke-width=".9"/></svg>
<span style="left:798.5px;top:637.91px;font-size:10.5px;line-height:12.5px;color:#0a0a1a;letter-spacing:0.031px;width:116px;overflow:hidden;">LJC_KNC_Trendy_T-shirt</span>
<div style="left:682px;top:643px;width:2px;height:2px;background:#111;"></div>
<svg style="left:694px;top:636px;" width="12" height="15" viewBox="0 0 12 15"><path d="M3.2 7 V4.5 C3.2 1.5 8.8 1.5 8.8 4.5 V7" fill="none" stroke="#333" stroke-width="1.7"/><path d="M3.2 7 V4.5 C3.2 1.5 8.8 1.5 8.8 4.5 V7" fill="none" stroke="#bbb" stroke-width=".6"/><rect x="0.7" y="6.5" width="10.6" height="8" rx="1" fill="#E9A93A" stroke="#5a3a00" stroke-width=".9"/><rect x="1.5" y="7.2" width="9" height="2.2" fill="#F8D27A"/><circle cx="6" cy="10" r="1.3" fill="#111"/><rect x="5.4" y="10" width="1.2" height="2.6" fill="#111"/></svg>
<svg style="left:732px;top:599px;" width="27" height="26" viewBox="0 0 27 26"><path d="M13 4 L9.5 6 C10.5 9 10.8 10.5 9.3 12 C10.5 15 10.5 18 9.5 22.5 H17 L16.5 5.2 C15 5.2 14 5 13 4 Z" fill="none" stroke="#cfcfcf" stroke-width=".8"/></svg>
<svg style="left:732px;top:631px;" width="27" height="26" viewBox="0 0 27 26"><path d="M13 8 v1 M12 12 v1 M14.5 11 v1 M13 15 v1 M12.5 19 v1 M14 17 v.8" stroke="#bbb" stroke-width=".8"/></svg>
<div style="left:672px;top:660px;width:243px;height:110px;background:#333333;"></div>
<div style="left:915px;top:596px;width:20px;height:174px;background:#F0F0F0;border-left:1px solid #fff;"></div>
<div style="left:916px;top:612px;width:15px;height:16px;background:#CDCDCD;"></div>
<svg style="left:919px;top:600.5px;" width="11" height="8" viewBox="0 0 11 8"><path d="M2 6.3 L5.5 2.8 L9 6.3" stroke="#555" stroke-width="2" fill="none"/></svg>
<svg style="left:919px;top:757.5px;" width="11" height="8" viewBox="0 0 11 8"><path d="M2 1.7 L5.5 5.2 L9 1.7" stroke="#555" stroke-width="2" fill="none"/></svg>
<svg style="left:680px;top:780px;" width="56" height="24" viewBox="0 0 56 24"><path d="M8.2 17 H20.4 V8" stroke="#111" stroke-width="1.1" fill="none"/><path d="M7 7.2 L8.6 5 H13.2 L14.6 7.2 H19.7 V16.3 H7 Z" fill="#EFE0A0" stroke="#9a8a40" stroke-width=".9"/><path d="M7.6 8.6 H19 V11.5 H7.6 Z" fill="#fcf6d8" opacity=".85"/><path d="M4.4 12.3 H11 M8.2 9.2 V15.4" stroke="#052" stroke-width="2.4" opacity=".85"/><path d="M4.6 11.7 H10.4 M7.7 8.8 V14.6" stroke="#00dc00" stroke-width="1.6"/><path d="M41 7.2 Q43 4.6 45 7.2" stroke="#444" stroke-width="1.3" fill="#999"/><path d="M36.4 8.6 Q36.4 7.2 38 7.2 H47.6 Q49.2 7.2 49.2 8.6 V9.6 H36.4 Z" fill="#b4b4b4" stroke="#333" stroke-width="1"/><path d="M38 10 H47.6 L47 18.6 H38.6 Z" fill="#e4e8ec" stroke="#333" stroke-width="1.3" stroke-linejoin="round"/><path d="M40.7 11 V17.6 M43 11 V17.6" stroke="#2a7ab8" stroke-width="1.2"/><path d="M45.2 11 V17.6" stroke="#567" stroke-width=".9" stroke-dasharray="1.5 1"/></svg>
<div style="left:672px;top:813px;width:263px;height:3px;background:#fafafa;"></div>
<div style="left:936px;top:813px;width:28px;height:3px;background:#EAE7DD;"></div>
<svg style="left:0px;top:0px;font-family:'Liberation Sans', sans-serif;" width="988" height="120" viewBox="0 0 988 120"><defs>
<linearGradient id="gpage" x1="0" y1="0" x2="0" y2="1"><stop offset="0" stop-color="#d8d8d8"/><stop offset=".55" stop-color="#ffffff"/><stop offset="1" stop-color="#f4f4f4"/></linearGradient>
<linearGradient id="gpageg" x1="0" y1="0" x2="0" y2="1"><stop offset="0" stop-color="#b5b5b5"/><stop offset="1" stop-color="#c4c4c4"/></linearGradient>
<linearGradient id="gfold" x1="0" y1="0" x2="1" y2="1"><stop offset="0" stop-color="#a6d6f6"/><stop offset="1" stop-color="#459be0"/></linearGradient>
<linearGradient id="ggreen" x1="0" y1="0" x2="0" y2="1"><stop offset="0" stop-color="#5cd05c"/><stop offset="1" stop-color="#1f9a1f"/></linearGradient>
<linearGradient id="ggrey" x1="0" y1="0" x2="0" y2="1"><stop offset="0" stop-color="#8f8f8f"/><stop offset="1" stop-color="#868686"/></linearGradient>
<radialGradient id="glens" cx=".4" cy=".35" r=".7"><stop offset="0" stop-color="#ffffff"/><stop offset="1" stop-color="#c9d6e8"/></radialGradient>
<linearGradient id="gbook" x1="0" y1="0" x2="0" y2="1"><stop offset="0" stop-color="#c6d6e8"/><stop offset="1" stop-color="#9db4cf"/></linearGradient>
<linearGradient id="gstore" x1="0" y1="0" x2="1" y2="1"><stop offset="0" stop-color="#cfe0f5"/><stop offset="1" stop-color="#ffffff"/></linearGradient>
<linearGradient id="gbluebox" x1="0" y1="0" x2="1" y2="1"><stop offset="0" stop-color="#b8d6f2"/><stop offset="1" stop-color="#2e7fd0"/></linearGradient>
<linearGradient id="ggradbox" x1="0" y1="0" x2="1" y2="0"><stop offset="0" stop-color="#ffffff"/><stop offset=".35" stop-color="#f0f0f0"/><stop offset="1" stop-color="#555"/></linearGradient>
<radialGradient id="ghelp" cx=".4" cy=".3" r=".8"><stop offset="0" stop-color="#ffd060"/><stop offset=".6" stop-color="#f0a018"/><stop offset="1" stop-color="#b86c00"/></radialGradient>
</defs><path d="M31.5 64.5 H46.5 L52.5 70.5 V89 H31.5 Z" fill="#555" opacity=".55"/><path d="M30.5 63 H45.5 L51.5 69 V88 H30.5 Z" fill="url(#gpage)" stroke="#707070" stroke-width=".8"/><path d="M45.5 63 V69 H51.5 Z" fill="#e9e9e9" stroke="#707070" stroke-width=".5"/><circle cx="32.6" cy="82.8" r="6.7" fill="#3f8a12"/><circle cx="32.6" cy="82.6" r="5.8" fill="#78c020"/><ellipse cx="32.6" cy="80" rx="4.6" ry="2.8" fill="#b4e470" opacity=".7"/><path d="M32.6 78.6 V87 M28.4 82.8 H36.8" stroke="#fff" stroke-width="2.7"/><path d="M69 66.2 L78.5 63.6 L80 66 L88 65 L90 86 L70 90 Z" fill="#fff" opacity=".92"/><path d="M87.5 64.4 L90.2 62.6 L92 64.2 L94.6 66.4 L95.2 83.5 L91 85.5 Z" fill="#4f9ee0"/><path d="M68.4 69.6 L86.8 66.2 L93.2 83.2 L69.8 90 Z" fill="url(#gfold)" stroke="#3b8ad0" stroke-width=".6"/><path d="M69.9 89.7 L93 83" stroke="#2878c0" stroke-width="1.1"/><path d="M78.6 65.4 C85 63.4 90.6 66 91.8 72.8 L95.6 72.4 L91.6 80.4 L84.2 74.6 L87.8 74 C87 69.4 83.6 66.6 78.6 65.4 Z" fill="#3c3c3c" stroke="#222" stroke-width=".5"/><path d="M80.5 65.4 C85.5 64.6 89.8 67 90.8 72" stroke="#777" stroke-width=".8" fill="none"/><path d="M110 62.8 H135 L137.4 65 V90.8 H110 Z" fill="#2b2b2b" stroke="#111" stroke-width=".6"/><rect x="117" y="62.8" width="14.5" height="9.5" fill="#d9d9d9"/><rect x="117" y="62.8" width="14.5" height="3" fill="#f2f2f2"/><rect x="125.5" y="64" width="3.2" height="7" fill="#2b2b2b"/><rect x="114" y="76" width="19.5" height="13" fill="#f6f6f6" stroke="#999" stroke-width=".5"/><rect x="115.5" y="78.5" width="16.5" height="1" fill="#c8c8c8"/><rect x="115.5" y="81.1" width="16.5" height="1" fill="#c8c8c8"/><rect x="115.5" y="83.7" width="16.5" height="1" fill="#c8c8c8"/><rect x="115.5" y="86.3" width="16.5" height="1" fill="#c8c8c8"/><rect x="145" y="56" width="2" height="39" fill="#666"/><rect x="278" y="56" width="2" height="39" fill="#666"/><rect x="370" y="56" width="2" height="39" fill="#666"/><rect x="544" y="56" width="2" height="39" fill="#666"/><path d="M159.5 64.0 H173.0 L178.0 69.0 V86.0 H159.5 Z" fill="#555" opacity=".55"/><path d="M158.5 62.5 H172.0 L177.0 67.5 V85.0 H158.5 Z" fill="url(#gpage)" stroke="#707070" stroke-width=".8"/><path d="M172.0 62.5 V67.5 H177.0 Z" fill="#e9e9e9" stroke="#707070" stroke-width=".5"/><rect x="162" y="67.0" width="10" height="1" fill="#bdbdbd"/><rect x="162" y="69.8" width="10" height="1" fill="#bdbdbd"/><rect x="162" y="72.6" width="10" height="1" fill="#bdbdbd"/><rect x="162" y="75.4" width="10" height="1" fill="#bdbdbd"/><rect x="162" y="78.2" width="10" height="1" fill="#bdbdbd"/><rect x="162" y="81.0" width="10" height="1" fill="#bdbdbd"/><path d="M172.5 69.5 L181.8 84" stroke="#e8e8e8" stroke-width="2.2" stroke-linecap="round"/><path d="M183.2 70 L174.5 83.5" stroke="#f4f4f4" stroke-width="2.2" stroke-linecap="round"/><path d="M172.5 69.5 L181.8 84 M183.2 70 L174.5 83.5" stroke="#777" stroke-width=".5" fill="none"/><ellipse cx="172.3" cy="85.6" rx="3.4" ry="2.6" transform="rotate(-35 172.3 85.6)" fill="none" stroke="#2c8fc8" stroke-width="2"/><ellipse cx="183.6" cy="85.8" rx="3.4" ry="2.6" transform="rotate(35 183.6 85.8)" fill="none" stroke="#2c8fc8" stroke-width="2"/><path d="M201.5 64.0 H212.0 L216.0 68.0 V86.5 H201.5 Z" fill="#555" opacity=".55"/><path d="M200.5 62.5 H211.0 L215.0 66.5 V85.5 H200.5 Z" fill="url(#gpage)" stroke="#707070" stroke-width=".8"/><path d="M211.0 62.5 V66.5 H215.0 Z" fill="#e9e9e9" stroke="#707070" stroke-width=".5"/><rect x="203.5" y="67.0" width="8" height="1" fill="#bdbdbd"/><rect x="203.5" y="69.8" width="8" height="1" fill="#bdbdbd"/><rect x="203.5" y="72.6" width="8" height="1" fill="#bdbdbd"/><rect x="203.5" y="75.4" width="8" height="1" fill="#bdbdbd"/><rect x="203.5" y="78.2" width="8" height="1" fill="#bdbdbd"/><rect x="203.5" y="81.0" width="8" height="1" fill="#bdbdbd"/><path d="M211.8 68.0 H223.20000000000002 L228.20000000000002 73.0 V90.5 H211.8 Z" fill="#555" opacity=".55"/><path d="M210.8 66.5 H222.20000000000002 L227.20000000000002 71.5 V89.5 H210.8 Z" fill="url(#gpage)" stroke="#707070" stroke-width=".8"/><path d="M222.20000000000002 66.5 V71.5 H227.20000000000002 Z" fill="#e9e9e9" stroke="#707070" stroke-width=".5"/><rect x="213.5" y="73" width="10.5" height="1" fill="#bdbdbd"/><rect x="213.5" y="76" width="10.5" height="1" fill="#bdbdbd"/><rect x="213.5" y="79" width="10.5" height="1" fill="#bdbdbd"/><rect x="213.5" y="82" width="10.5" height="1" fill="#bdbdbd"/><rect x="213.5" y="85" width="10.5" height="1" fill="#bdbdbd"/><rect x="241.5" y="63" width="19" height="23" rx="1.5" fill="#8d8d8d" stroke="#858585" stroke-width=".6"/><rect x="247" y="61.8" width="8" height="3" rx="1" fill="#a4a4a4"/><path d="M253.5 68.0 H265.0 L270.0 73.0 V90.0 H253.5 Z" fill="#555" opacity=".55"/><path d="M252.5 66.5 H264.0 L269.0 71.5 V89.0 H252.5 Z" fill="url(#gpageg)" stroke="#8b8b8b" stroke-width=".8"/><path d="M264.0 66.5 V71.5 H269.0 Z" fill="#e9e9e9" stroke="#8b8b8b" stroke-width=".5"/><rect x="255.5" y="73" width="10.5" height="1" fill="#a9a9a9"/><rect x="255.5" y="76" width="10.5" height="1" fill="#a9a9a9"/><rect x="255.5" y="79" width="10.5" height="1" fill="#a9a9a9"/><rect x="255.5" y="82" width="10.5" height="1" fill="#a9a9a9"/><rect x="255.5" y="85" width="10.5" height="1" fill="#a9a9a9"/><path d="M292.3 64.1 L292.3 81.9 L309.5 81.9 L302.4 74.6 C305 71.5 309.5 70.5 312.5 72.5 C315.5 75 314.5 80.5 311.3 84.9 C317 82 320.5 77.5 319.8 72.5 C319 66.5 313 63.5 307 64.2 C303 64.7 300 66.8 297.8 69.6 Z" fill="url(#ggreen)" stroke="#1f8a1f" stroke-width=".8" stroke-linejoin="round"/><path d="M293.3 66.5 L298 71 C300.5 67.5 304 65.6 308 65.3 C313 65 317.5 67.5 318.6 72" stroke="#9af09a" stroke-width="1" fill="none" opacity=".75"/><path d="M 361.5 64.1 L 361.5 81.9 L 344.3 81.9 L 351.4 74.6 C 348.8 71.5 344.3 70.5 341.3 72.5 C 338.3 75.0 339.3 80.5 342.5 84.9 C 336.8 82.0 333.3 77.5 334.0 72.5 C 334.8 66.5 340.8 63.5 346.8 64.2 C 350.8 64.7 353.8 66.8 356.0 69.6 Z" fill="url(#ggrey)" stroke="#808080" stroke-width=".8" stroke-linejoin="round"/><path d="M 360.5 66.5 L 355.8 71.0 C 353.3 67.5 349.8 65.6 345.8 65.3 C 340.8 65.0 336.3 67.5 335.2 72.0" stroke="#a4a4a4" stroke-width="1" fill="none" opacity=".8"/><rect x="382.3" y="61.5" width="20.4" height="20" fill="#fff" stroke="#e82020" stroke-width="1.2"/><path d="M386 77 C390 73 391 68 390 65.5 C392 70 396 73 399 73.5" stroke="#e02020" stroke-width="1" fill="none"/><rect x="388.2" y="65.6" width="23.6" height="24.2" fill="#F39200" stroke="#000" stroke-width="1.3"/><rect x="389.6" y="75.4" width="20.8" height="13.2" fill="#111"/><g fill="#111"><circle cx="400.0" cy="68.6" r="2.7"/><path d="M400 75.2 L400.0 68.6" stroke="#111" stroke-width="3.2"/><circle cx="395.6" cy="70.3" r="2.7"/><path d="M400 75.2 L395.6 70.3" stroke="#111" stroke-width="3.2"/><circle cx="404.4" cy="70.3" r="2.7"/><path d="M400 75.2 L404.4 70.3" stroke="#111" stroke-width="3.2"/><circle cx="393.4" cy="74.5" r="2.7"/><path d="M400 75.2 L393.4 74.5" stroke="#111" stroke-width="3.2"/><circle cx="406.6" cy="74.5" r="2.7"/><path d="M400 75.2 L406.6 74.5" stroke="#111" stroke-width="3.2"/><circle cx="400" cy="75.2" r="4.6"/></g><g fill="#fff"><circle cx="400.0" cy="68.6" r="1.75"/><path d="M400 75.2 L400.0 68.6" stroke="#fff" stroke-width="1.5"/><circle cx="395.6" cy="70.3" r="1.75"/><path d="M400 75.2 L395.6 70.3" stroke="#fff" stroke-width="1.5"/><circle cx="404.4" cy="70.3" r="1.75"/><path d="M400 75.2 L404.4 70.3" stroke="#fff" stroke-width="1.5"/><circle cx="393.4" cy="74.5" r="1.75"/><path d="M400 75.2 L393.4 74.5" stroke="#fff" stroke-width="1.5"/><circle cx="406.6" cy="74.5" r="1.75"/><path d="M400 75.2 L406.6 74.5" stroke="#fff" stroke-width="1.5"/><circle cx="400" cy="75.2" r="3"/></g><text x="400.3" y="87.6" font-size="11.6" font-weight="700" text-anchor="middle" fill="#fff" textLength="17.6" lengthAdjust="spacingAndGlyphs">SVG</text><rect x="423.5" y="63.4" width="30.4" height="24.3" fill="#fff" stroke="#222" stroke-width="1"/><rect x="425.7" y="65.6" width="26" height="19.9" fill="#6db8ee"/><rect x="425.7" y="72" width="26" height="7" fill="#b8def8"/><path d="M425.7 80.5 C432 77.5 444 77.5 451.7 80 V85.5 H425.7 Z" fill="#55b52e"/><path d="M430 86 C432 75 438 67.5 452 69" stroke="#333" stroke-width="1.1" fill="none"/><path d="M427 80 L441 65.5" stroke="#444" stroke-width=".7"/><g fill="#ddd" stroke="#333" stroke-width=".7"><circle cx="435" cy="72.5" r="1.2"/><circle cx="441" cy="65.8" r="1.2"/><circle cx="450.5" cy="69" r="1.2"/><circle cx="427.5" cy="79.5" r="1.2"/><circle cx="430.5" cy="85.5" r="1.2"/></g><rect x="468" y="61.8" width="25.6" height="29" fill="url(#gbook)" stroke="#5e7894" stroke-width=".7"/><rect x="468" y="61.8" width="2.6" height="29" fill="#4a6482"/><rect x="469.2" y="87" width="24" height="2.4" fill="#f6f6f6"/><rect x="468.4" y="89.4" width="25" height="1.4" fill="#4a6482"/><path d="M482.2 66.2 L484.3 71.9 L490.4 72.1 L485.6 75.9 L487.3 81.8 L482.2 78.4 L477.1 81.8 L478.8 75.9 L474.0 72.1 L480.1 71.9 Z" fill="#FFEE00" stroke="#111" stroke-width="1"/><rect x="509.4" y="64.4" width="29" height="25.6" fill="#26324e" opacity=".8"/><rect x="508.5" y="63.6" width="28.8" height="25.2" fill="#fff" stroke="#4a7cc4" stroke-width="1"/><rect x="509.4" y="64.4" width="27" height="6" fill="#e4eefa" opacity=".7"/><path d="M510.2 71.4 L512.8 71.6 L515.8 82 L532.2 79.9 L535.2 72 L523.6 70.7" fill="none" stroke="#3a6ab4" stroke-width="1.6" stroke-linejoin="round" stroke-linecap="round"/><circle cx="519.3" cy="85.2" r="1.9" fill="#3a6ab4"/><circle cx="519.3" cy="85.2" r=".7" fill="#9ab8e0"/><circle cx="530.4" cy="83.4" r="1.9" fill="#3a6ab4"/><circle cx="530.4" cy="83.4" r=".7" fill="#9ab8e0"/><ellipse cx="519.3" cy="68.6" rx="2" ry="3.4" fill="#fff" stroke="#3a6ab4" stroke-width="1.3"/><ellipse cx="515.2" cy="68.4" rx="1.6" ry="1.8" fill="#6a90c8" stroke="#3a6ab4" stroke-width=".8"/><path d="M560.5 62.9 H575.5 L581.5 68.9 V88.4 H560.5 Z" fill="#555" opacity=".55"/><path d="M559.5 61.4 H574.5 L580.5 67.4 V87.4 H559.5 Z" fill="url(#gpage)" stroke="#707070" stroke-width=".8"/><path d="M574.5 61.4 V67.4 H580.5 Z" fill="#e9e9e9" stroke="#707070" stroke-width=".5"/><path d="M576.4 79.6 L583 85.8" stroke="#111" stroke-width="3.4" stroke-linecap="round"/><circle cx="572.3" cy="75.4" r="5.3" fill="url(#glens)" stroke="#111" stroke-width="1.5"/><path d="M602 62.9 H617 L623 68.9 V88.4 H602 Z" fill="#555" opacity=".55"/><path d="M601 61.4 H616 L622 67.4 V87.4 H601 Z" fill="url(#gpage)" stroke="#707070" stroke-width=".8"/><path d="M616 61.4 V67.4 H622 Z" fill="#e9e9e9" stroke="#707070" stroke-width=".5"/><path d="M626.6 65.4 L613 79.6" stroke="#222" stroke-width="5" stroke-linecap="butt"/><path d="M614.5 78.5 L611 82 L607.6 84.6 L609.6 80.4 L612 77 Z" fill="#222"/><path d="M621.6 65.6 L627.4 70.6" stroke="#222" stroke-width="2.2"/><path d="M626 63.6 L628.6 66" stroke="#222" stroke-width="2"/></svg>
<span style="left:28.8px;top:94.94px;font-size:10px;line-height:12px;color:#000;letter-spacing:-0.839px;">New</span>
<span style="left:68px;top:94.94px;font-size:10px;line-height:12px;color:#000;letter-spacing:-0.617px;">Open</span>
<span style="left:111px;top:94.94px;font-size:10px;line-height:12px;color:#000;letter-spacing:-0.199px;">Save</span>
<span style="left:162.4px;top:94.94px;font-size:10px;line-height:12px;color:#000;letter-spacing:-0.288px;">Cut</span>
<span style="left:200.3px;top:94.94px;font-size:10px;line-height:12px;color:#000;letter-spacing:-0.265px;">Copy</span>
<span style="left:241.3px;top:94.94px;font-size:10px;line-height:12px;color:#000;letter-spacing:-0.436px;">Paste</span>
<span style="left:294.3px;top:94.94px;font-size:10px;line-height:12px;color:#000;letter-spacing:-0.602px;">Undo</span>
<span style="left:335.5px;top:94.94px;font-size:10px;line-height:12px;color:#000;letter-spacing:-0.652px;">Redo</span>
<span style="left:381.8px;top:94.94px;font-size:10px;line-height:12px;color:#000;letter-spacing:-0.391px;">Import</span>
<span style="left:425.3px;top:94.94px;font-size:10px;line-height:12px;color:#000;letter-spacing:-0.521px;">Trace</span>
<span style="left:464.5px;top:94.94px;font-size:10px;line-height:12px;color:#000;letter-spacing:-0.368px;">Library</span>
<span style="left:510.2px;top:94.94px;font-size:10px;line-height:12px;color:#000;letter-spacing:-0.441px;">Store</span>
<span style="left:552.1px;top:94.94px;font-size:10px;line-height:12px;color:#000;letter-spacing:-0.425px;">Preview</span>
<span style="left:600.3px;top:94.94px;font-size:10px;line-height:12px;color:#000;letter-spacing:-0.289px;">Cutter</span>
<div style="left:20px;top:128px;width:31px;height:32px;background:#E6E6E6;border:1px solid #3C9BF5;"></div>
<div style="left:57px;top:128px;width:31px;height:32px;background:#DDDDDD;border:1px solid #B8B8B8;"></div>
<div style="left:96px;top:128px;width:31px;height:32px;background:#DDDDDD;border:1px solid #B8B8B8;"></div>
<div style="left:135px;top:128px;width:30px;height:32px;background:#DDDDDD;border:1px solid #B8B8B8;"></div>
<svg style="left:0px;top:120px;" width="988" height="48" viewBox="0 120 988 48"><path d="M40.1 148.3 L45.400000000000006 153.5" stroke="#3a3a3a" stroke-width="3" stroke-linecap="round"/><path d="M40.1 147.7 L45.400000000000006 152.9" stroke="#b4b4b4" stroke-width="1.3" stroke-linecap="round"/><circle cx="34.6" cy="142.5" r="7.5" fill="url(#glens)" stroke="#626e7e" stroke-width="1.4"/><circle cx="34.6" cy="142.5" r="6.1" fill="none" stroke="#bccbe0" stroke-width="1.5"/><path d="M31 142.7 H38.3 M34.65 139 V146.4" stroke="#111" stroke-width="1.5"/><path d="M77.3 148.3 L82.6 153.5" stroke="#3a3a3a" stroke-width="3" stroke-linecap="round"/><path d="M77.3 147.7 L82.6 152.9" stroke="#b4b4b4" stroke-width="1.3" stroke-linecap="round"/><circle cx="71.8" cy="142.5" r="7.5" fill="url(#glens)" stroke="#626e7e" stroke-width="1.4"/><circle cx="71.8" cy="142.5" r="6.1" fill="none" stroke="#bccbe0" stroke-width="1.5"/><path d="M68 142.7 H75.6" stroke="#111" stroke-width="1.6"/><path d="M116.8 148.3 L122.1 153.5" stroke="#3a3a3a" stroke-width="3" stroke-linecap="round"/><path d="M116.8 147.7 L122.1 152.9" stroke="#b4b4b4" stroke-width="1.3" stroke-linecap="round"/><circle cx="111.3" cy="142.5" r="7.5" fill="url(#glens)" stroke="#626e7e" stroke-width="1.4"/><circle cx="111.3" cy="142.5" r="6.1" fill="none" stroke="#bccbe0" stroke-width="1.5"/><rect x="106.6" y="139.6" width="9.6" height="5.6" fill="#fff" stroke="#7d8aa0" stroke-width="1"/><path d="M154.8 148.3 L160.10000000000002 153.5" stroke="#3a3a3a" stroke-width="3" stroke-linecap="round"/><path d="M154.8 147.7 L160.10000000000002 152.9" stroke="#b4b4b4" stroke-width="1.3" stroke-linecap="round"/><circle cx="149.3" cy="142.5" r="7.5" fill="url(#glens)" stroke="#626e7e" stroke-width="1.4"/><circle cx="149.3" cy="142.5" r="6.1" fill="none" stroke="#bccbe0" stroke-width="1.5"/><path d="M146 138.6 H150.5 L152.6 140.8 V146.6 H146 Z" fill="#fff" stroke="#555" stroke-width="1"/></svg>
<div style="left:183px;top:144px;width:158px;height:2px;background:#E4EAEA;"></div>
<div style="left:188px;top:134px;width:10px;height:21px;background:#DDDDDD;border:1px solid #ACACAC;"></div>
<div style="left:358px;top:134px;width:60px;height:23px;background:#fff;border:1px solid #ABADB3;"></div>
<span style="left:364px;top:137.89px;font-size:11px;line-height:13px;color:#000;letter-spacing:0.230px;">42 %</span>
<div style="left:401px;top:137px;width:15px;height:8px;background:#EAEAEA;border:1px solid #ADADAD;"></div>
<div style="left:401px;top:146px;width:15px;height:8px;background:#EAEAEA;border:1px solid #ADADAD;"></div>
<svg style="left:406px;top:139.5px;" width="5" height="3" viewBox="0 0 5 3"><path d="M0 3 L2.5 0 L5 3 Z" fill="#000"/></svg>
<svg style="left:406px;top:148.5px;" width="5" height="3" viewBox="0 0 5 3"><path d="M0 0 L2.5 3 L5 0 Z" fill="#000"/></svg>
<svg style="left:0px;top:169px;" width="60" height="560" viewBox="0 169 60 560"><path d="M21 183 L21.2 196.3 L24.4 193.4 L27 199 L29.2 198 L26.6 192.6 L30.8 192.2 Z" fill="#111"/><path d="M21.6 185 L21.7 194.5 L23.6 192.6 Z" fill="#666" opacity=".7"/><ellipse cx="26" cy="217.8" rx="7.2" ry="3.7" fill="none" stroke="#222" stroke-width="1.25"/><path d="M20.6 220.2 C19.2 221.4 19.2 223.2 20.6 223.4 C22 223.6 22.8 222.4 22.6 221 M21 223.4 C20.6 224.8 19.6 225.6 18.6 225.8" stroke="#222" stroke-width="1" fill="none"/><path d="M18.6 222.4 H33.6" stroke="#222" stroke-width="1"/><path d="M26.6 219.2 V226 L31.8 222.5 Z" fill="#c9c9c9" stroke="#222" stroke-width="1" stroke-linejoin="round"/><rect x="18.5" y="239.5" width="2.6" height="2.6" fill="#fff" stroke="#222" stroke-width=".9"/><path d="M21.5 240.6 H29 M19.8 242.6 V250" stroke="#222" stroke-width="1"/><path d="M23.6 244.6 L23.8 254.2 L26.2 252 L28 255.6 L29.6 254.8 L27.8 251.3 L30.8 251 Z" fill="#fff" stroke="#111" stroke-width="1"/><text x="26" y="281.2" font-family="'Liberation Serif',serif" font-size="16.5" text-anchor="middle" fill="#111">T</text><path d="M37.8 287.1 V282.0 L32.699999999999996 287.1 Z" fill="#111"/><path d="M26.5 304.8 L22 314.5 L24.5 318 H28.5 L31 314.5 Z" fill="#fff" stroke="#111" stroke-width="1.3" stroke-linejoin="round"/><path d="M26.5 306 V313.5" stroke="#111" stroke-width="1"/><circle cx="26.5" cy="314" r="1" fill="#111"/><rect x="23.6" y="318.6" width="5.8" height="2.2" fill="#111"/><path d="M19.2 345.6 L29.6 335 L32.2 337.6 L21.8 348.2 Z" fill="#E9A23B" stroke="#7a4a10" stroke-width=".7"/><path d="M20.4 346.8 L30.8 336.2" stroke="#f8c878" stroke-width=".8"/><path d="M29.6 335 L31 333.6 C32 332.8 33.6 334.2 33.4 335.4 L32.2 337.6 Z" fill="#e83828"/><path d="M19.2 345.6 L18.2 349 L21.8 348.2 Z" fill="#222"/><path d="M27.6 368.6 L33 363.4 L34.2 364.6 L29 370.2 Z" fill="#9a5a28" stroke="#5a3010" stroke-width=".6"/><path d="M27.6 368.6 L29 370.2 C27.5 374 23 376 18.2 376.6 C21.5 374 24 371 27.6 368.6 Z" fill="#1a1a1a"/><path d="M18.2 398 L24.2 391.2 H33.2 L27.2 398 Z" fill="#f08a94" stroke="#b85060" stroke-width=".7"/><path d="M18.2 398 H27.2 V403.6 H18.2 Z" fill="#e06a78" stroke="#b85060" stroke-width=".7"/><path d="M27.2 398 L33.2 391.2 V396.8 L27.2 403.6 Z" fill="#c8505e" stroke="#b85060" stroke-width=".7"/><rect x="18.5" y="421.5" width="14.5" height="11.5" fill="url(#gbluebox)" stroke="#2468b4" stroke-width="1"/><path d="M37.8 438.3 V433.2 L32.699999999999996 438.3 Z" fill="#111"/><path d="M19 470.8 L28 461.8 L29.8 463.6 L20.8 472.6 L18.2 473.4 Z" fill="#fff" stroke="#111" stroke-width="1"/><path d="M27.2 460 L31.6 464.4" stroke="#111" stroke-width="2.2" stroke-linecap="round"/><circle cx="31.8" cy="458.6" r="2.5" fill="#111"/><path d="M29 462.6 L31.8 458.8" stroke="#111" stroke-width="2.4"/><rect x="18.5" y="486.5" width="14.5" height="11" fill="url(#ggradbox)" stroke="#111" stroke-width="1"/><path d="M18.6 534 L28.4 523.6 L33.8 521.4 L33 527.6 L30 529.6 L24.5 532.4 Z" fill="#444" stroke="#333" stroke-width=".5"/><path d="M21.2 532.6 L28.8 525.6 L30.4 528 L24.6 531.4 Z" fill="#f4f4f4"/><path d="M37.8 540.3 V535.2 L32.699999999999996 540.3 Z" fill="#111"/><path d="M19.5 552 L32.5 555 L32.5 562 L19.5 563.5 Z" fill="none" stroke="#222" stroke-width="1"/><rect x="18.0" y="550.5" width="3" height="3" fill="#111"/><rect x="31.0" y="553.5" width="3" height="3" fill="#111"/><rect x="31.0" y="560.5" width="3" height="3" fill="#111"/><rect x="18.0" y="562.0" width="3" height="3" fill="#111"/><rect x="18.2" y="579" width="15.6" height="15" fill="#0a0a0a"/><ellipse cx="26" cy="585.6" rx="6.4" ry="5.6" fill="#fff"/><ellipse cx="26" cy="585.8" rx="2.6" ry="3.2" fill="#0a0a0a"/><rect x="25.3" y="587" width="1.5" height="4.5" fill="#0a0a0a"/><rect x="14.5" y="604.5" width="23" height="23" rx="2" fill="#BEBEBE" stroke="#9d9d9d" stroke-width="1"/><path d="M29.4 619.4 L33.6 623.4" stroke="#4a5058" stroke-width="3" stroke-linecap="round"/><path d="M29.6 619.2 L33.6 623" stroke="#cfdbe8" stroke-width="1.3" stroke-linecap="round"/><circle cx="25" cy="614.8" r="5.9" fill="#22c4e4" stroke="#4e5864" stroke-width="1.4"/><circle cx="25" cy="614.8" r="4.7" fill="none" stroke="#8fd6ee" stroke-width=".9"/><path d="M21.6 614.9 H28.4 M25 611.5 V618.3" stroke="#0a0a0a" stroke-width="1.9"/><rect x="18.6" y="642.6" width="15" height="6.6" fill="#E8A845" stroke="#7a4c10" stroke-width=".8"/><path d="M21.5 649 V646 M24.2 649 V646.6 M26.8 649 V646 M29.4 649 V646.6 M31.6 649 V646" stroke="#3a2408" stroke-width=".9"/><rect x="19.2" y="643.2" width="13.8" height="1.4" fill="#f8d48c"/><path d="M21.6 675.4 C20.4 673.4 18.6 672.2 19 671 C19.6 669.8 21.4 670.6 22.6 672.2 L22.4 668.4 C22.4 666.8 24.4 666.8 24.6 668.4 L24.8 667.2 C25 665.8 27 665.8 27.2 667.2 L27.4 668 C27.6 666.8 29.6 666.8 29.8 668.2 L30 669.6 C30.4 668.6 32.2 668.8 32.2 670.2 L32.4 675.8 C32.4 679 30.8 680.4 30.2 681.8 H24 C23.4 679.6 22.6 677.4 21.6 675.4 Z" fill="#F9C27A" stroke="#7a4a10" stroke-width=".9"/><path d="M24.7 668.6 V673 M27.3 668 V673 M29.9 669.6 V673.4" stroke="#7a4a10" stroke-width=".7"/></svg>
<svg style="left:0px;top:580px;" width="60" height="64" viewBox="0 0 60 64"><rect x="8.5" y="11.6" width="43" height="41.6" fill="none" stroke="#E8433F" stroke-width="2.8"/></svg>
<svg style="left:930px;top:169px;font-family:'Liberation Sans', sans-serif;" width="58" height="651" viewBox="930 169 58 651"><path d="M943.5 196.0 H959.0 L965.0 202.0 V223.5 H943.5 Z" fill="#555" opacity=".55"/><path d="M942.5 194.5 H958.0 L964.0 200.5 V222.5 H942.5 Z" fill="url(#gpage)" stroke="#707070" stroke-width=".8"/><path d="M958.0 194.5 V200.5 H964.0 Z" fill="#e9e9e9" stroke="#707070" stroke-width=".5"/><path d="M935.5 233.5 H968 Q972 233.5 972 237.5 V266 Q972 270 968 270 H935.5 Z" fill="#ECE9D8" stroke="#d8d5c6" stroke-width="1"/><path d="M972.6 238 V266" stroke="#9a9686" stroke-width="1"/><path d="M936 270.6 H968" stroke="#9a9686" stroke-width="1"/><path d="M952.7 235.7 L958.9 241.9 L954.6 241.9 L954.6 248.5 L961.2 248.5 L961.2 244.2 L967.4 250.4 L961.2 256.6 L961.2 252.3 L954.6 252.3 L954.6 258.9 L958.9 258.9 L952.7 265.1 L946.5 258.9 L950.8 258.9 L950.8 252.3 L944.2 252.3 L944.2 256.6 L938.0 250.4 L944.2 244.2 L944.2 248.5 L950.8 248.5 L950.8 241.9 L946.5 241.9 Z" fill="#222"/><g transform="rotate(-14 952 291)"><path d="M937.6 291 C937.6 283 944 278.2 952 278.2 C960.5 278.2 966.6 283.4 966.6 290.4 C966.6 296 962.5 297.6 959.6 297.8 C957.2 298 956.6 299.6 957 301.4 C957.5 303.6 955.5 305 952 305 C943.5 305 937.6 299 937.6 291 Z" fill="#EAD3A0" stroke="#6a4420" stroke-width="1.4"/><ellipse cx="951.4" cy="299.4" rx="2.9" ry="2" fill="#f6f0e4" stroke="#6a4420" stroke-width="1"/></g><ellipse cx="948.6" cy="282.3" rx="2.3" ry="2.5" fill="#d63a2a"/><ellipse cx="956.2" cy="284.2" rx="2.8" ry="1.7" fill="#f0b400"/><ellipse cx="960.6" cy="289.8" rx="2.2" ry="2" fill="#6ab82a"/><ellipse cx="943.4" cy="287.6" rx="2.3" ry="2.4" fill="#8a3ab8"/><ellipse cx="945.6" cy="294.6" rx="2.1" ry="2.6" fill="#2a8ae0"/><path d="M941.8 345.4 L956.6 331.6" stroke="#5e5e5e" stroke-width="5.4" stroke-linecap="round"/><path d="M941.8 345.2 L956.6 331.4" stroke="#cfcfcf" stroke-width="3.2" stroke-linecap="round"/><path d="M943.6 343.4 L953 334.8" stroke="#8a8a8a" stroke-width="1" stroke-linecap="round"/><path d="M963.2 322.4 C960 321.6 956.2 323 954.6 326.2 C953 329.6 954.2 333.4 957.2 335.2 C960.4 337 964.6 336.2 966.8 333 C967.4 332 967.8 331 967.9 330 L962.4 331.2 L959.4 328 L960.6 324 Z" fill="#c4c4c4" stroke="#5e5e5e" stroke-width="1.1" stroke-linejoin="round"/><path d="M941.5 363.5 H964.5 Q968.5 363.5 968.5 367.5 V387.5 L964.5 391.5 H941.5 Q937.5 391.5 937.5 387.5 V367.5 Q937.5 363.5 941.5 363.5 Z" fill="#f6f6f6" stroke="#9a9a9a" stroke-width="1"/><path d="M940 392.3 H965 L969.3 388 V368" stroke="#555" stroke-width="1.1" fill="none"/><text x="940.4" y="387.2" font-size="12.6" fill="#111" textLength="8.4" lengthAdjust="spacingAndGlyphs">A</text><text x="950.4" y="387.2" font-size="24" fill="#111" textLength="14.8" lengthAdjust="spacingAndGlyphs">A</text><path d="M940 374.4 H949.2 L944.6 367.4 Z" fill="#333"/><path d="M935.5 575.5 H968 Q972 575.5 972 579.5 V607 Q972 611 968 611 H935.5 Z" fill="#ECE9D8" stroke="#d8d5c6" stroke-width="1"/><path d="M972.6 580 V607" stroke="#9a9686" stroke-width="1"/><path d="M936 611.6 H968" stroke="#9a9686" stroke-width="1"/><path d="M938 597.6 L952.4 590.4 L967.4 597.6 L952.6 604.6 Z" fill="#fff" stroke="#222" stroke-width="1.2" stroke-linejoin="round"/><path d="M938 592.6 L952.4 585.4 L967.4 592.6 L952.6 599.6 Z" fill="#fff" stroke="#222" stroke-width="1.2" stroke-linejoin="round"/><path d="M938 587.6 L952.4 580.4 L967.4 587.6 L952.6 594.6 Z" fill="#fff" stroke="#222" stroke-width="1.2" stroke-linejoin="round"/><circle cx="952.6" cy="634.4" r="13.4" fill="#8a5a10" opacity=".5"/><circle cx="952.3" cy="633.6" r="13" fill="url(#ghelp)" stroke="#a86400" stroke-width=".8"/><ellipse cx="952" cy="627" rx="9" ry="5" fill="#fff" opacity=".22"/><text x="952.2" y="642.8" font-size="25" font-weight="700" text-anchor="middle" fill="#fff" textLength="12" lengthAdjust="spacingAndGlyphs">?</text></svg>
</div></body></html>
